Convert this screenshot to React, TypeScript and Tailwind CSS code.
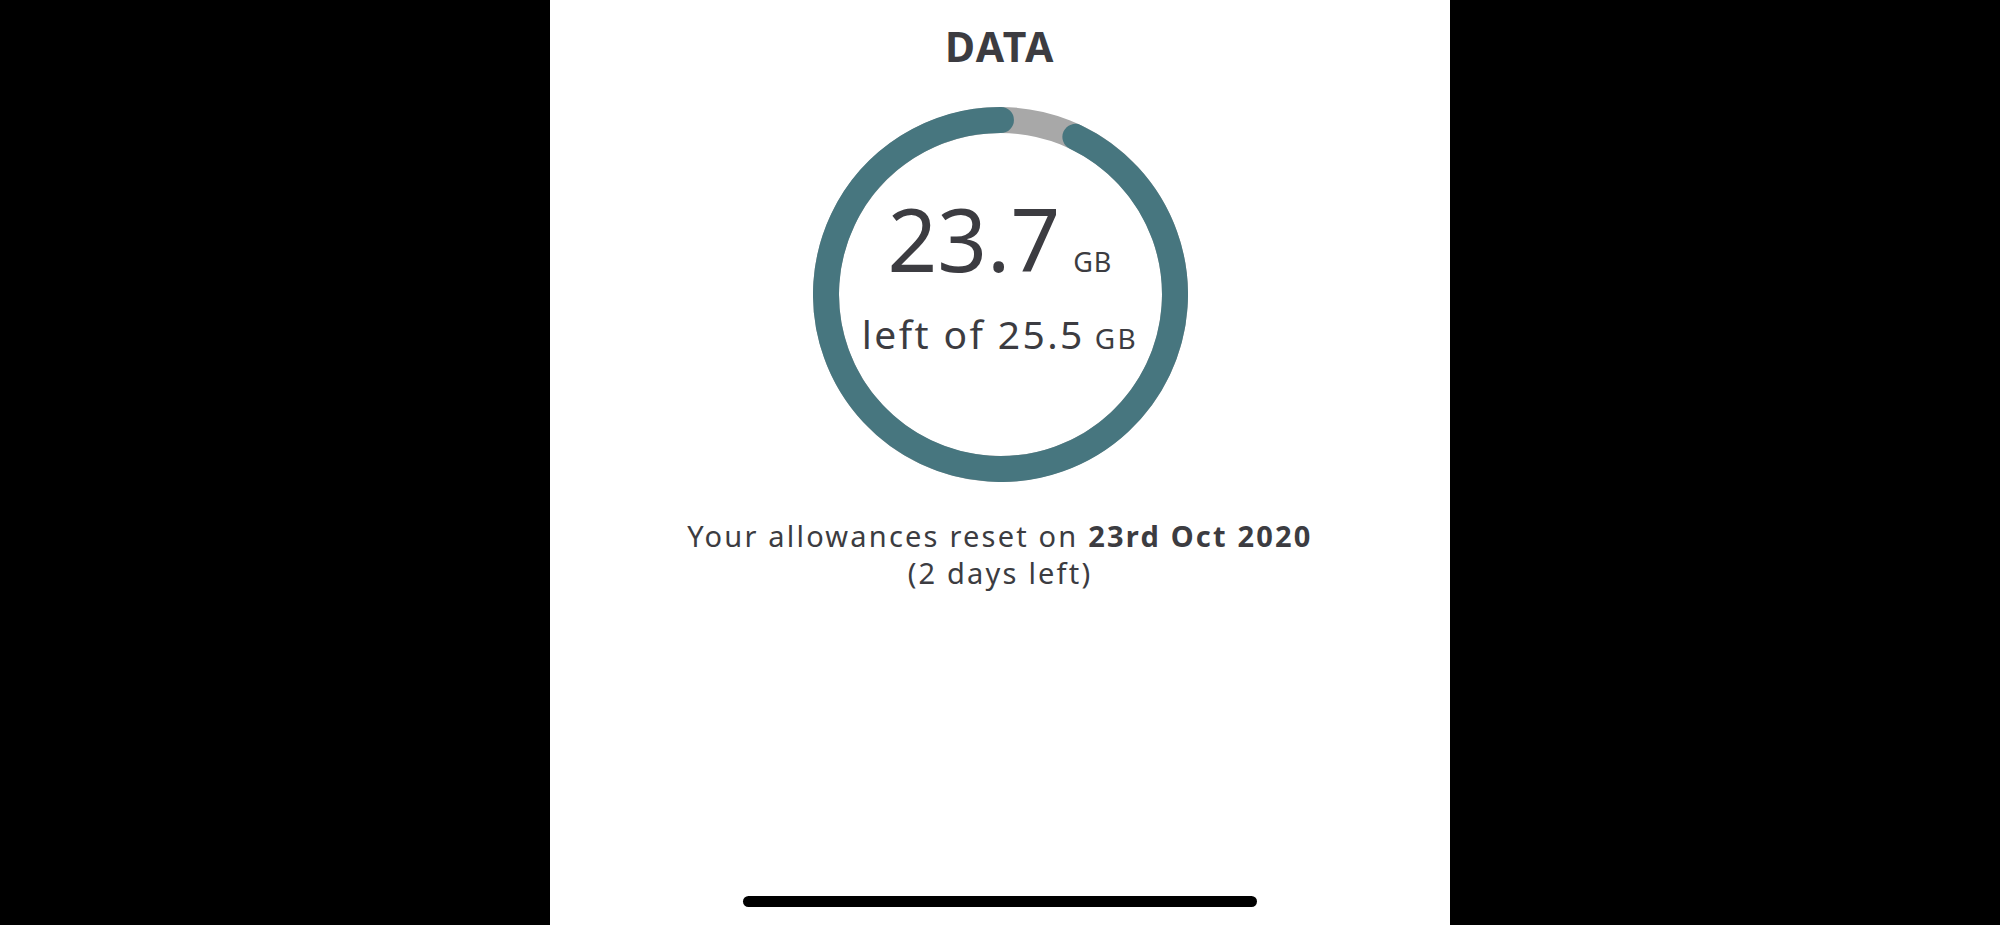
import React from 'react'

const RADIUS = 174.5
const STROKE = 26
const CIRC = 2 * Math.PI * RADIUS

function DataRing({ left, total }: { left: number; total: number }) {
  const used = (total - left) / total
  const arcLen = CIRC * (1 - used)
  // arc runs clockwise from the end of the used part back round to the top
  const rotate = -90 + used * 360

  return (
    <div className="grid">
      <svg
        className="col-start-1 row-start-1"
        width={375}
        height={375}
        viewBox="0 0 375 375"
      >
        <circle cx={187.5} cy={187.5} r={RADIUS} fill="none" stroke="#a8a8a8" strokeWidth={STROKE} />
        <circle
          cx={187.5}
          cy={187.5}
          r={RADIUS}
          fill="none"
          stroke="#47767f"
          strokeWidth={STROKE}
          strokeLinecap="round"
          strokeDasharray={`${arcLen} ${CIRC}`}
          transform={`rotate(${rotate} 187.5 187.5)`}
        />
      </svg>

      <div className="col-start-1 row-start-1 flex flex-col items-center pt-[88px] text-[#3c3c41]">
        <div className="leading-none">
          <span className="text-[87px]">{left}</span>
          <span className="ml-[13px] text-[27px] tracking-[1px]">GB</span>
        </div>
        <div className="mt-[32px] leading-none tracking-[2.4px]">
          <span className="text-[39px]">left of {total}</span>
          <span className="ml-[10px] text-[28px]">GB</span>
        </div>
      </div>
    </div>
  )
}

export default function App() {
  return (
    <div className="flex h-[925px] w-full justify-center bg-black font-['Noto_Sans',sans-serif]">
      <div className="flex h-full w-[900px] flex-col items-center bg-white text-[#3c3c41]">
        <h1 className="mt-[26px] text-[41px] font-bold leading-none tracking-[1.5px]">DATA</h1>

        <div className="mt-[40px]">
          <DataRing left={23.7} total={25.5} />
        </div>

        <p className="mt-[35px] text-center text-[29px] leading-[37px] tracking-[2.2px]">
          Your allowances reset on <span className="font-bold">23rd Oct 2020</span>
          <br />
          (2 days left)
        </p>

        <div className="mt-auto mb-[18px] h-[11px] w-[514px] rounded-full bg-black" />
      </div>
    </div>
  )
}
